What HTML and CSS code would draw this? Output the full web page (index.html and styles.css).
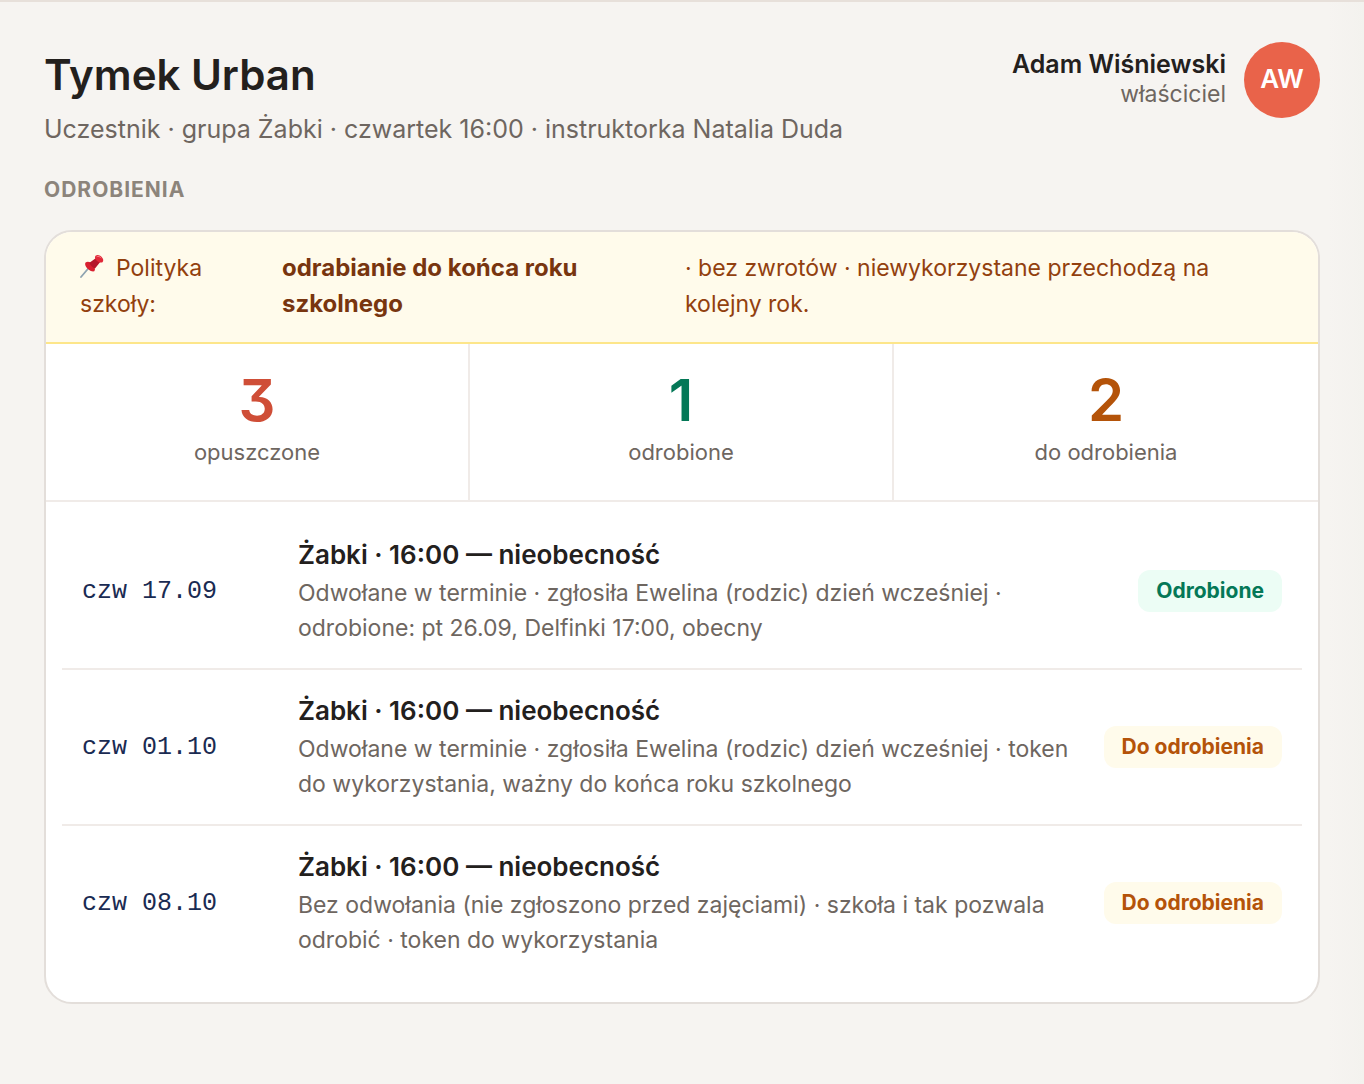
FILE: index.html
```html
<!DOCTYPE html>
<html lang="pl">
<head>
<meta charset="utf-8">
<meta name="viewport" content="width=device-width, initial-scale=1">
<title>Tymek Urban – odrobienia</title>
<link rel="stylesheet" href="styles.css">
</head>
<body>
<main class="page">
  <header class="header">
    <div class="participant">
      <h1 class="participant-name">Tymek Urban</h1>
      <p class="participant-meta">Uczestnik · grupa Żabki · czwartek 16:00 · instruktorka Natalia Duda</p>
    </div>
    <div class="account">
      <div class="account-text">
        <div class="account-name">Adam Wiśniewski</div>
        <div class="account-role">właściciel</div>
      </div>
      <div class="avatar">AW</div>
    </div>
  </header>

  <h2 class="section-title">ODROBIENIA</h2>

  <section class="card">
    <div class="policy">
      <span><svg class="pin" viewBox="0 0 24 24" aria-hidden="true">
        <path d="M1 23 9.500 13" stroke="#8ea3b0" stroke-width="1.800" stroke-linecap="round"/>
        <path d="M5.300 8.800c2-1.600 4.800-1.100 7.100 1.100 2.500 2.400 3.300 5.200 1.900 7.400-2.400.4-4.800-.8-6.700-2.600-1.900-1.800-2.900-3.900-2.300-5.900z" fill="#d81f2f"/>
        <path d="M9.500 8.800 16 4l4.200 4-5 6.300c-1.500.3-5.700-3.500-5.700-5.500z" fill="#b5162a"/>
        <path d="M15.500 1.700c1.800-1.500 4.200-.8 6 1 1.800 1.700 2.400 4.100 1 5.500-1.900 1-4.100.1-5.700-1.400-1.600-1.500-2.400-3.400-1.300-5.100z" fill="#e12838"/>
        <path d="M17 2.600c1.300-.6 2.900 0 4 1.100" stroke="#f77b83" stroke-width="1" fill="none" stroke-linecap="round"/>
      </svg>Polityka szkoły:</span>
      <strong>odrabianie do końca roku szkolnego</strong>
      <span>· bez zwrotów · niewykorzystane przechodzą na kolejny rok.</span>
    </div>

    <div class="stats">
      <div class="stat stat-missed"><div class="stat-value">3</div><div class="stat-label">opuszczone</div></div>
      <div class="stat stat-done"><div class="stat-value">1</div><div class="stat-label">odrobione</div></div>
      <div class="stat stat-due"><div class="stat-value">2</div><div class="stat-label">do odrobienia</div></div>
    </div>

    <ul class="absences">
      <li class="absence">
        <time class="absence-date">czw 17.09</time>
        <div class="absence-info">
          <h3 class="absence-title">Żabki · 16:00 — nieobecność</h3>
          <p class="absence-note">Odwołane w terminie · zgłosiła Ewelina (rodzic) dzień wcześniej · odrobione: pt 26.09, Delfinki 17:00, obecny</p>
        </div>
        <span class="badge badge-done">Odrobione</span>
      </li>
      <li class="absence">
        <time class="absence-date">czw 01.10</time>
        <div class="absence-info">
          <h3 class="absence-title">Żabki · 16:00 — nieobecność</h3>
          <p class="absence-note">Odwołane w terminie · zgłosiła Ewelina (rodzic) dzień wcześniej · token do wykorzystania, ważny do końca roku szkolnego</p>
        </div>
        <span class="badge badge-due">Do odrobienia</span>
      </li>
      <li class="absence">
        <time class="absence-date">czw 08.10</time>
        <div class="absence-info">
          <h3 class="absence-title">Żabki · 16:00 — nieobecność</h3>
          <p class="absence-note">Bez odwołania (nie zgłoszono przed zajęciami) · szkoła i tak pozwala odrobić · token do wykorzystania</p>
        </div>
        <span class="badge badge-due">Do odrobienia</span>
      </li>
    </ul>
  </section>
</main>
</body>
</html>
```
FILE: styles.css
```css
*,
*::before,
*::after {
  box-sizing: border-box;
}

body {
  margin: 0;
  min-height: 100vh;
  border-top: 2px solid #e7e0da;
  background: linear-gradient(to left, #f3f2ee, #f6f4f1 36px);
  color: #23201d;
  font-family: Inter, "Open Sans", sans-serif;
  font-size: 23px;
  font-feature-settings: "cv09";
}

h1,
h2,
h3,
p,
ul {
  margin: 0;
  padding: 0;
}

.page {
  padding: 40px 44px;
}

.header {
  display: flex;
  justify-content: space-between;
  align-items: flex-start;
  gap: 24px;
}

.participant {
  padding-top: 4px;
}

.participant-name {
  font-size: 42px;
  font-weight: 600;
  line-height: 58px;
}

.participant-meta {
  color: #6e6660;
  font-size: 25px;
  line-height: 50px;
}

.account {
  display: flex;
  align-items: center;
  gap: 18px;
}

.account-text {
  padding-bottom: 2px;
  text-align: right;
}

.account-name {
  font-size: 25px;
  font-weight: 600;
  line-height: 30px;
}

.account-role {
  color: #6e6660;
  line-height: 30px;
}

.avatar {
  display: flex;
  align-items: center;
  justify-content: center;
  width: 76px;
  height: 76px;
  padding-bottom: 4px;
  border-radius: 50%;
  background: #e9634a;
  color: #fff;
  font-size: 26px;
  font-weight: 600;
}

.section-title {
  margin: 20px 0 24px;
  color: #8c847b;
  font-size: 21px;
  font-weight: 700;
  line-height: 32px;
  letter-spacing: 1px;
}

.card {
  overflow: hidden;
  border: 2px solid #e3deda;
  border-radius: 28px;
  background: #fff;
}

.policy {
  display: grid;
  grid-template-columns: 202fr 403fr 599fr;
  padding: 18px 34px 20px;
  border-bottom: 2px solid #fde68a;
  background: #fffbeb;
  color: #92400e;
  line-height: 36px;
}

.policy > * {
  padding-right: 24px;
}

.policy strong {
  color: #78350f;
  font-size: 24px;
  font-weight: 700;
}

.pin {
  width: 24px;
  height: 24px;
  margin-right: 12px;
  fill: none;
  vertical-align: -2px;
}

.stats {
  display: grid;
  grid-template-columns: repeat(3, 1fr);
  border-bottom: 2px solid #f0ebe8;
  text-align: center;
}

.stat {
  padding: 26px 16px 32px;
}

.stat:not(:last-child) {
  border-right: 2px solid #f0ebe8;
}

.stat-value {
  font-size: 58px;
  font-weight: 600;
  line-height: 60px;
}

.stat-label {
  margin-top: 6px;
  color: #6e6660;
  font-size: 22px;
  line-height: 32px;
}

.stat-missed .stat-value {
  color: #cf4e37;
}

.stat-done .stat-value {
  color: #047857;
}

.stat-due .stat-value {
  color: #b45309;
}

.absences {
  padding: 12px 16px 22px;
  list-style: none;
}

.absence {
  display: grid;
  grid-template-columns: 192px 1fr auto;
  align-items: center;
  column-gap: 24px;
  padding: 22px 20px;
}

.absence + .absence {
  border-top: 2px solid #f0ebe8;
}

.absence-date {
  color: #1a2b52;
  font-family: "Liberation Mono", monospace;
  font-size: 25px;
}

.absence-title {
  font-size: 26px;
  font-weight: 600;
  line-height: 38px;
}

.absence-note {
  margin-top: 2px;
  color: #6e6660;
  line-height: 35px;
}

.badge {
  padding: 5px 18px;
  border-radius: 12px;
  font-size: 21px;
  font-weight: 700;
  line-height: 32px;
}

.badge-done {
  background: #ecfdf5;
  color: #047857;
}

.badge-due {
  background: #fffbeb;
  color: #b45309;
}
```
